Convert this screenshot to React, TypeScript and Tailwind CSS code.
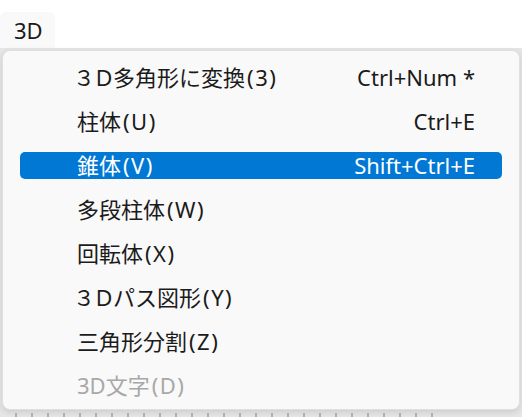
type Item = {
    prefix?: string;
    label: string;
    key: string;
    shortcut?: string;
    active?: boolean;
    disabled?: boolean;
};

const items: Item[] = [
    { prefix: "３Ｄ", label: "多角形に変換", key: "(3)", shortcut: "Ctrl+Num *" },
    { label: "柱体", key: "(U)", shortcut: "Ctrl+E" },
    { label: "錐体", key: "(V)", shortcut: "Shift+Ctrl+E", active: true },
    { label: "多段柱体", key: "(W)" },
    { label: "回転体", key: "(X)" },
    { prefix: "３Ｄ", label: "パス図形", key: "(Y)" },
    { label: "三角形分割", key: "(Z)" },
    { label: "3D文字", key: "(D)", disabled: true },
];

const ticks = Array.from({ length: 27 }, (_, i) => i);

export default function App() {
    return (
        <div
            className="w-[522px] h-[417px] bg-white flex flex-col overflow-hidden"
            style={{ fontFamily: '"Noto Sans", "Noto Sans CJK JP", sans-serif' }}
        >
            {/* menu bar */}
            <div className="h-[48px] flex items-end">
                <div className="h-[36px] w-[55px] bg-[#f9f9f9] rounded-t-md flex items-center pl-[14px] text-[22px] text-[#1a1a1a]">
                    3D
                </div>
            </div>
            {/* app area behind the popup */}
            <div className="flex-1 bg-[#e6e6e6] flex flex-col pt-[2px] px-[2px]">
                <div className="h-[360px] bg-[#f9f9f9] rounded-lg border border-[#e0e0e0] shadow-[0_2px_6px_rgba(0,0,0,0.12)] flex flex-col pt-[4px] px-[17px]">
                    {items.map((item) => (
                        <div key={item.label} className="h-[44px] flex items-center">
                            <div
                                className={`h-[27px] w-full rounded-[5px] flex items-center justify-between pl-[57px] pr-[27px] text-[22px] leading-none ${
                                    item.active
                                        ? "bg-[#0078d4] text-white"
                                        : item.disabled
                                          ? "text-[#a8a8a8]"
                                          : "text-[#1b1b1b]"
                                }`}
                            >
                                <span className="flex items-center">
                                    {item.prefix && (
                                        <span className="-ml-[4px] tracking-[-2px]">{item.prefix}</span>
                                    )}
                                    <span>{item.label}</span>
                                    <span className="pl-[2px] tracking-[1.5px]">{item.key}</span>
                                </span>
                                {item.shortcut && <span>{item.shortcut}</span>}
                            </div>
                        </div>
                    ))}
                </div>
                {/* ruler */}
                <div className="flex-1 flex items-end gap-[14px] pl-[13px]">
                    {ticks.map((t) => (
                        <div key={t} className="w-[2px] h-[4px] bg-[#9fb8ae]" />
                    ))}
                </div>
            </div>
        </div>
    );
}
